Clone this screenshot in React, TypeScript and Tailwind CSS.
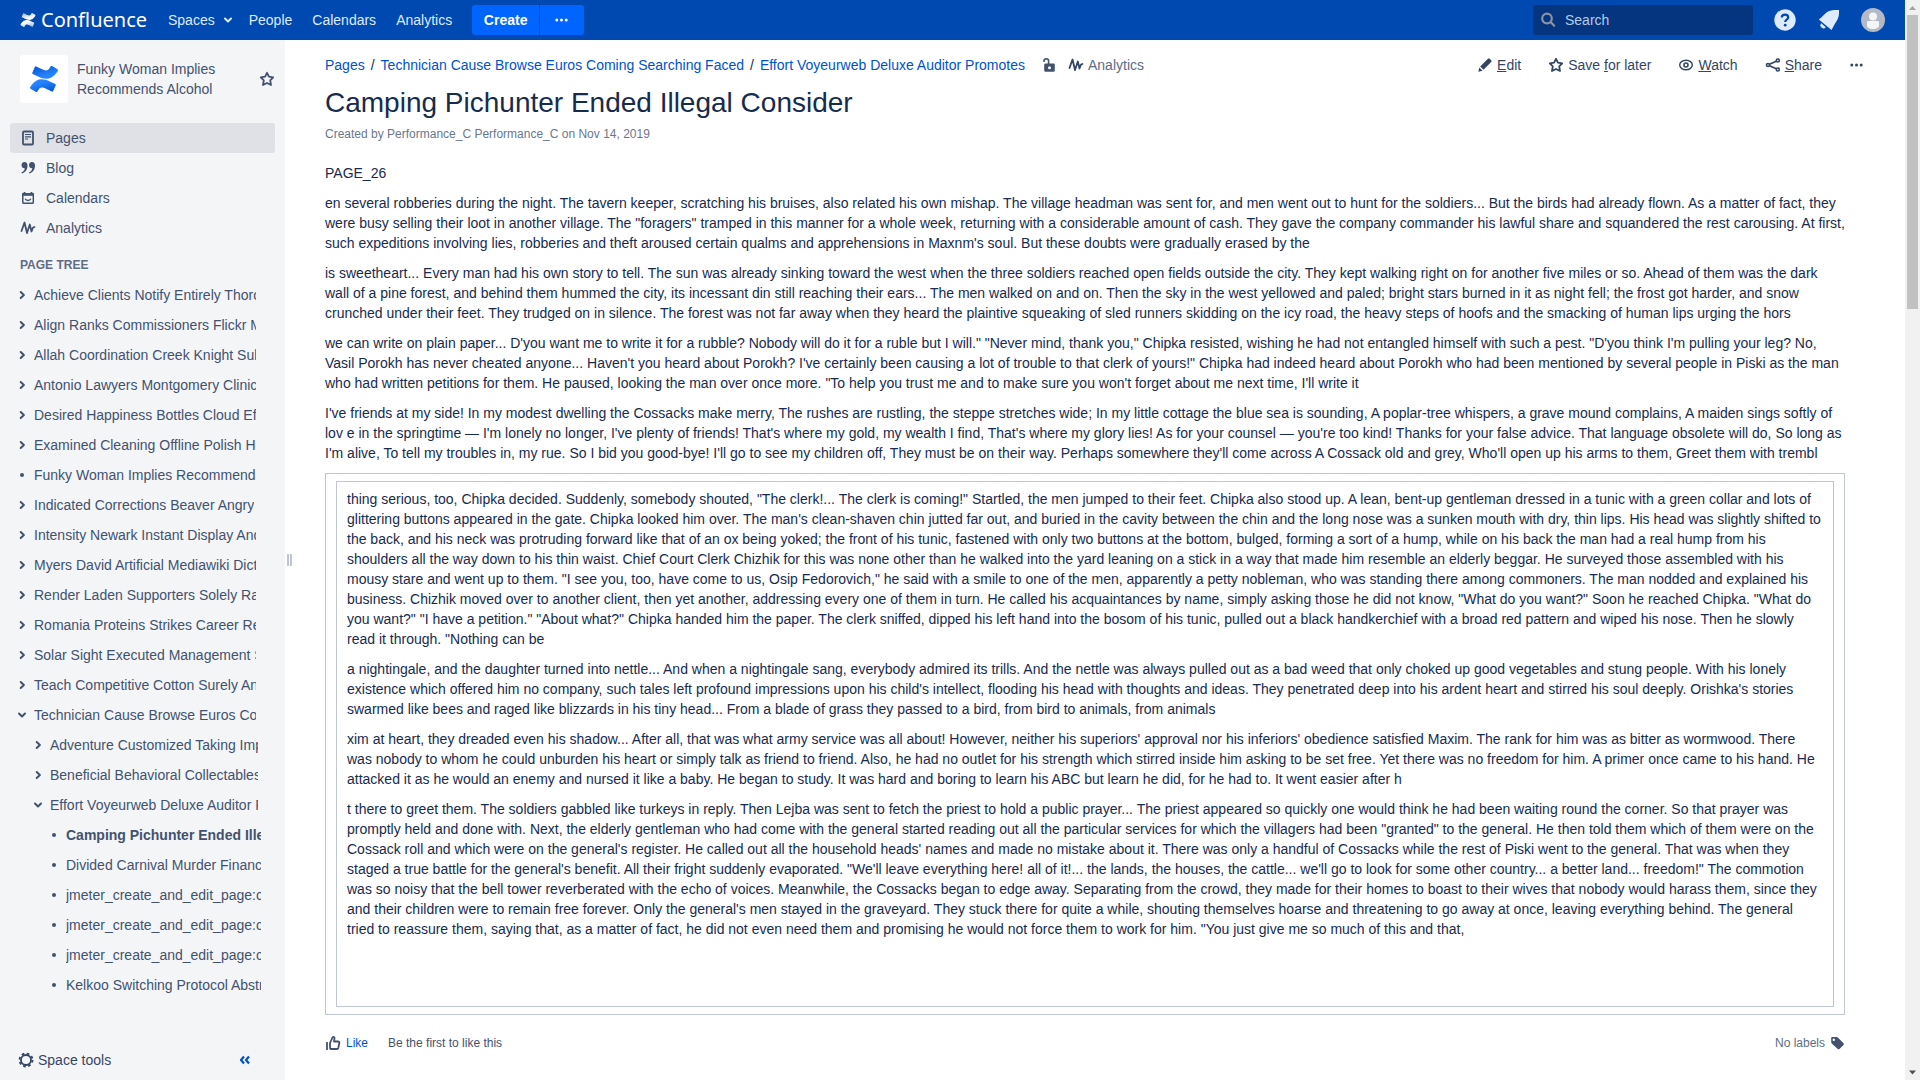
import React from "react";

const BODY_BEFORE = [
  "PAGE_26",
  "en several robberies during the night. The tavern keeper, scratching his bruises, also related his own mishap. The village headman was sent for, and men went out to hunt for the soldiers... But the birds had already flown. As a matter of fact, they were busy selling their loot in another village. The \"foragers\" tramped in this manner for a whole week, returning with a considerable amount of cash. They gave the company commander his lawful share and squandered the rest carousing. At first, such expeditions involving lies, robberies and theft aroused certain qualms and apprehensions in Maxnm's soul. But these doubts were gradually erased by the",
  "is sweetheart... Every man had his own story to tell. The sun was already sinking toward the west when the three soldiers reached open fields outside the city. They kept walking right on for another five miles or so. Ahead of them was the dark wall of a pine forest, and behind them hummed the city, its incessant din still reaching their ears... The men walked on and on. Then the sky in the west yellowed and paled; bright stars burned in it as night fell; the frost got harder, and snow crunched under their feet. They trudged on in silence. The forest was not far away when they heard the plaintive squeaking of sled runners skidding on the icy road, the heavy steps of hoofs and the smacking of human lips urging the hors",
  "we can write on plain paper... D'you want me to write it for a rubble? Nobody will do it for a ruble but I will.\" \"Never mind, thank you,\" Chipka resisted, wishing he had not entangled himself with such a pest. \"D'you think I'm pulling your leg? No, Vasil Porokh has never cheated anyone... Haven't you heard about Porokh? I've certainly been causing a lot of trouble to that clerk of yours!\" Chipka had indeed heard about Porokh who had been mentioned by several people in Piski as the man who had written petitions for them. He paused, looking the man over once more. \"To help you trust me and to make sure you won't forget about me next time, I'll write it",
  "I've friends at my side! In my modest dwelling the Cossacks make merry, The rushes are rustling, the steppe stretches wide; In my little cottage the blue sea is sounding, A poplar-tree whispers, a grave mound complains, A maiden sings softly of lov e in the springtime — I'm lonely no longer, I've plenty of friends! That's where my gold, my wealth I find, That's where my glory lies! As for your counsel — you're too kind! Thanks for your false advice. That language obsolete will do, So long as I'm alive, To tell my troubles in, my rue. So I bid you good-bye! I'll go to see my children off, They must be on their way. Perhaps somewhere they'll come across A Cossack old and grey, Who'll open up his arms to them, Greet them with trembl",
];

const BODY_BOXED = [
  "thing serious, too, Chipka decided. Suddenly, somebody shouted, \"The clerk!... The clerk is coming!\" Startled, the men jumped to their feet. Chipka also stood up. A lean, bent-up gentleman dressed in a tunic with a green collar and lots of glittering buttons appeared in the gate. Chipka looked him over. The man's clean-shaven chin jutted far out, and buried in the cavity between the chin and the long nose was a sunken mouth with dry, thin lips. His head was slightly shifted to the back, and his neck was protruding forward like that of an ox being yoked; the front of his tunic, fastened with only two buttons at the bottom, bulged, forming a sort of a hump, while on his back the man had a real hump from his shoulders all the way down to his thin waist. Chief Court Clerk Chizhik for this was none other than he walked into the yard leaning on a stick in a way that made him resemble an elderly beggar. He surveyed those assembled with his mousy stare and went up to them. \"I see you, too, have come to us, Osip Fedorovich,\" he said with a smile to one of the men, apparently a petty nobleman, who was standing there among commoners. The man nodded and explained his business. Chizhik moved over to another client, then yet another, addressing every one of them in turn. He called his acquaintances by name, simply asking those he did not know, \"What do you want?\" Soon he reached Chipka. \"What do you want?\" \"I have a petition.\" \"About what?\" Chipka handed him the paper. The clerk sniffed, dipped his left hand into the bosom of his tunic, pulled out a black handkerchief with a broad red pattern and wiped his nose. Then he slowly read it through. \"Nothing can be",
  "a nightingale, and the daughter turned into nettle... And when a nightingale sang, everybody admired its trills. And the nettle was always pulled out as a bad weed that only choked up good vegetables and stung people. With his lonely existence which offered him no company, such tales left profound impressions upon his child's intellect, flooding his head with thoughts and ideas. They penetrated deep into his ardent heart and stirred his soul deeply. Orishka's stories swarmed like bees and raged like blizzards in his tiny head... From a blade of grass they passed to a bird, from bird to animals, from animals",
  "xim at heart, they dreaded even his shadow... After all, that was what army service was all about! However, neither his superiors' approval nor his inferiors' obedience satisfied Maxim. The rank for him was as bitter as wormwood. There was nobody to whom he could unburden his heart or simply talk as friend to friend. Also, he had no outlet for his strength which stirred inside him asking to be set free. Yet there was no freedom for him. A primer once came to his hand. He attacked it as he would an enemy and nursed it like a baby. He began to study. It was hard and boring to learn his ABC but learn he did, for he had to. It went easier after h",
  "t there to greet them. The soldiers gabbled like turkeys in reply. Then Lejba was sent to fetch the priest to hold a public prayer... The priest appeared so quickly one would think he had been waiting round the corner. So that prayer was promptly held and done with. Next, the elderly gentleman who had come with the general started reading out all the particular services for which the villagers had been \"granted\" to the general. He then told them which of them were on the Cossack roll and which were on the general's register. He called out all the household heads' names and made no mistake about it. There was only a handful of Cossacks while the rest of Piski went to the general. That was when they staged a true battle for the general's benefit. All their fright suddenly evaporated. \"We'll leave everything here! all of it!... the lands, the houses, the cattle... we'll go to look for some other country... a better land... freedom!\" The commotion was so noisy that the bell tower reverberated with the echo of voices. Meanwhile, the Cossacks began to edge away. Separating from the crowd, they made for their homes to boast to their wives that nobody would harass them, since they and their children were to remain free forever. Only the general's men stayed in the graveyard. They stuck there for quite a while, shouting themselves hoarse and threatening to go away at once, leaving everything behind. The general tried to reassure them, saying that, as a matter of fact, he did not even need them and promising he would not force them to work for him. \"You just give me so much of this and that,",
];

type Marker = "closed" | "open" | "leaf";
type Node = { label: string; marker: Marker; level: 0 | 1 | 2; current?: boolean };

const TREE: Node[] = [
  { label: "Achieve Clients Notify Entirely Thorough", marker: "closed", level: 0 },
  { label: "Align Ranks Commissioners Flickr Much", marker: "closed", level: 0 },
  { label: "Allah Coordination Creek Knight Sublime", marker: "closed", level: 0 },
  { label: "Antonio Lawyers Montgomery Clinic", marker: "closed", level: 0 },
  { label: "Desired Happiness Bottles Cloud Effort", marker: "closed", level: 0 },
  { label: "Examined Cleaning Offline Polish Have", marker: "closed", level: 0 },
  { label: "Funky Woman Implies Recommends Alcohol", marker: "leaf", level: 0 },
  { label: "Indicated Corrections Beaver Angry", marker: "closed", level: 0 },
  { label: "Intensity Newark Instant Display And", marker: "closed", level: 0 },
  { label: "Myers David Artificial Mediawiki Dictionary", marker: "closed", level: 0 },
  { label: "Render Laden Supporters Solely Rates", marker: "closed", level: 0 },
  { label: "Romania Proteins Strikes Career Relay", marker: "closed", level: 0 },
  { label: "Solar Sight Executed Management Site", marker: "closed", level: 0 },
  { label: "Teach Competitive Cotton Surely And", marker: "closed", level: 0 },
  { label: "Technician Cause Browse Euros Coming", marker: "open", level: 0 },
  { label: "Adventure Customized Taking Improve", marker: "closed", level: 1 },
  { label: "Beneficial Behavioral Collectables", marker: "closed", level: 1 },
  { label: "Effort Voyeurweb Deluxe Auditor Promotes", marker: "open", level: 1 },
  { label: "Camping Pichunter Ended Illegal Consider", marker: "leaf", level: 2, current: true },
  { label: "Divided Carnival Murder Finance", marker: "leaf", level: 2 },
  { label: "jmeter_create_and_edit_page:create", marker: "leaf", level: 2 },
  { label: "jmeter_create_and_edit_page:create", marker: "leaf", level: 2 },
  { label: "jmeter_create_and_edit_page:create", marker: "leaf", level: 2 },
  { label: "Kelkoo Switching Protocol Abstract", marker: "leaf", level: 2 },
];

const LEVEL_CLASS = ["pl-4 w-[256px]", "pl-8 w-[258px]", "pl-12 w-[261px]"];

function Chevron({ open }: { open?: boolean }) {
  return (
    <svg width="10" height="10" viewBox="0 0 10 10" fill="none" stroke="currentColor" strokeWidth="2" strokeLinecap="round" strokeLinejoin="round">
      {open ? <path d="M2 3.5 5 6.5 8 3.5" /> : <path d="M3.7 2 6.9 5 3.7 8" />}
    </svg>
  );
}

function DotsIcon() {
  return (
    <svg width="16" height="16" viewBox="0 0 16 16" fill="currentColor">
      <circle cx="2.800" cy="8" r="1.500" />
      <circle cx="7.500" cy="8" r="1.500" />
      <circle cx="12.200" cy="8" r="1.500" />
    </svg>
  );
}

function StarIcon() {
  return (
    <svg width="16" height="16" viewBox="0 0 16 16" fill="none" stroke="currentColor" strokeWidth="1.8" strokeLinejoin="round">
      <path d="M8 1.8 9.9 5.7 14.2 6.3 11.2 9.3 12 14 8 12 4 14 4.8 9.3 1.8 6.3 6.1 5.7Z" />
    </svg>
  );
}

function PulseIcon() {
  return (
    <svg width="16" height="16" viewBox="0 0 16 16" fill="none" stroke="currentColor" strokeWidth="1.800" strokeLinecap="round" strokeLinejoin="round">
      <path d="M1.500 11 4.500 2.500 7 13 9.800 4.500 11.500 11.500 13 7.500 14.500 7" />
    </svg>
  );
}

function PagesIcon() {
  return (
    <svg width="16" height="16" viewBox="0 0 16 16" fill="none" stroke="currentColor">
      <rect x="3" y="1.500" width="10" height="13" rx="1" strokeWidth="1.800" />
      <path d="M5 4.500h6M5 6.800h6M5 9h3" strokeWidth="1.200" />
    </svg>
  );
}

function QuoteIcon() {
  return (
    <svg width="16" height="16" viewBox="0 0 16 16" fill="currentColor">
      <path d="M4.500 2c2 0 3 1.500 3 3.600C7.500 9.500 5.500 12.500 2 13.500l-.5-1.200C3.500 11.500 4.500 10.300 4.800 8.200A3.100 3.100 0 1 1 4.500 2ZM12 2c2 0 3 1.500 3 3.600C15 9.500 13 12.500 9.500 13.500L9 12.300c2-.8 3-2 3.300-4.100A3.100 3.100 0 1 1 12 2Z" />
    </svg>
  );
}

function CalendarIcon() {
  return (
    <svg width="16" height="16" viewBox="0 0 16 16" fill="none" stroke="currentColor">
      <rect x="2.800" y="4" width="10.500" height="9.200" rx=".6" strokeWidth="1.500" />
      <path d="M2 4.500h12" strokeWidth="2.600" />
      <path d="M4.500 2v2M11.500 2v2" strokeWidth="1.800" />
      <path d="M5.200 8.800c1 2.200 4.600 2.200 5.600 0" strokeWidth="1.400" />
    </svg>
  );
}

function Mark({ id, top, deep, size }: { id: string; top: string; deep: string; size: number }) {
  return (
    <svg width={size} height={size} viewBox="0 0 32 32">
      <defs>
        <linearGradient id={`${id}a`} x1="0" y1="0" x2="0.6" y2="1">
          <stop offset="0" stopColor={deep} />
          <stop offset="0.8" stopColor={top} />
        </linearGradient>
        <linearGradient id={`${id}b`} x1="1" y1="1" x2="0.4" y2="0">
          <stop offset="0" stopColor={deep} />
          <stop offset="0.8" stopColor={top} />
        </linearGradient>
      </defs>
      <path fill={`url(#${id}b)`} d="M2.200 23.200c-.4.600-.7 1.200-1 1.600-.3.500-.1 1.100.4 1.500l5.800 3.500c.5.300 1.200.2 1.500-.3l.9-1.500c2.300-3.800 4.600-3.300 8.800-1.300l5.700 2.700c.6.300 1.200 0 1.500-.5l2.700-6.200c.3-.5 0-1.200-.5-1.400-1.200-.6-3.600-1.700-5.700-2.700-7.700-3.800-14.300-3.500-20.100 4.600Z" />
      <path fill={`url(#${id}a)`} d="M29.800 8.800c.4-.6.700-1.200 1-1.600.3-.5.100-1.100-.4-1.500l-5.800-3.500c-.5-.3-1.200-.2-1.500.3l-.9 1.500c-2.300 3.800-4.600 3.300-8.800 1.300L7.700 2.600c-.6-.3-1.200 0-1.500.5L3.500 9.300c-.3.500 0 1.200.5 1.400 1.200.6 3.600 1.700 5.700 2.700 7.700 3.800 14.300 3.500 20.100-4.600Z" />
    </svg>
  );
}

function TopBar() {
  return (
    <header className="flex h-10 shrink-0 items-center bg-[#0049b0] pl-5 text-[#deebff]">
      <a href="#home" className="flex items-center gap-[5px] text-white" aria-label="Confluence home">
        <Mark id="top" size={16} top="#ffffff" deep="#8fb4ea" />
        <span className="w-[109px] font-['Noto_Sans'] text-xl leading-10">Confluence</span>
      </a>
      <nav className="flex items-center">
        <button className="flex items-center gap-2 pl-[18px]">
          Spaces
          <Chevron open />
        </button>
        <a href="#people" className="pl-4">People</a>
        <a href="#calendars" className="pl-5">Calendars</a>
        <a href="#analytics" className="pl-5">Analytics</a>
      </nav>
      <div className="ml-5 flex h-[30px] gap-px text-white">
        <button className="w-[67px] rounded-l-[3px] bg-[#0065ff] font-bold">Create</button>
        <button className="flex w-11 items-center justify-center rounded-r-[3px] bg-[#0065ff]" aria-label="More create options">
          <DotsIcon />
        </button>
      </div>
      <label className="ml-auto flex h-[30px] w-[220px] items-center gap-2 rounded-[3px] bg-[#05357e] pl-2">
        <svg width="16" height="16" viewBox="0 0 16 16" fill="none" stroke="#8993a4" strokeWidth="2.200" strokeLinecap="round">
          <circle cx="6" cy="6.500" r="4.800" />
          <path d="m9.800 10.300 3.400 3.400" />
        </svg>
        <input aria-label="Search" placeholder="Search" className="w-40 bg-transparent outline-none placeholder:text-[#b3cbec]" />
      </label>
      <div className="mr-5 ml-5 flex items-center gap-5">
        <button aria-label="Help">
          <svg width="24" height="24" viewBox="0 0 24 24">
            <circle cx="12" cy="12" r="10.700" fill="#deebff" />
            <path d="M8.800 9.500c0-4 6.400-3.800 6.400-.2 0 2.400-3 2.300-3 4.700" fill="none" stroke="#0049b0" strokeWidth="2.200" />
            <circle cx="12.200" cy="17.200" r="1.400" fill="#0049b0" />
          </svg>
        </button>
        <button aria-label="Notifications">
          <svg width="24" height="24" viewBox="0 0 24 24" fill="#deebff">
            <path d="M1.800 11.500C6 8.500 8 5 11 3.500 14 1.800 19 2 22 2c.2 4 0 6.500-1.500 9.500-2 3.500-4 6.500-6 10.500Z" />
            <path d="M4.200 15.300a2.700 2.700 0 0 0 4.600 3.900Z" />
          </svg>
        </button>
        <button aria-label="User profile">
          <svg width="24" height="24" viewBox="0 0 24 24">
            <circle cx="12" cy="12" r="12" fill="#b3bac5" />
            <circle cx="12" cy="8.500" r="4" fill="#f4f5f7" />
            <path d="M6 14.500c0-1 .6-1.500 1.500-1.500h9c.9 0 1.500.5 1.500 1.500v3c0 2-2.500 3.500-6 3.500s-6-1.500-6-3.500Z" fill="#f4f5f7" />
          </svg>
        </button>
      </div>
    </header>
  );
}

const SPACE_LINKS = [
  { label: "Pages", Icon: PagesIcon, active: true },
  { label: "Blog", Icon: QuoteIcon, active: false },
  { label: "Calendars", Icon: CalendarIcon, active: false },
  { label: "Analytics", Icon: PulseIcon, active: false },
];

function Sidebar() {
  return (
    <aside className="flex w-[285px] shrink-0 flex-col bg-[#f4f5f7] text-[#42526e]">
      <div className="flex items-center pt-[15px] pr-[10px] pb-5 pl-5">
        <div className="flex size-12 items-center justify-center rounded-[3px] bg-white">
          <Mark id="space" size={30} top="#2684ff" deep="#0052cc" />
        </div>
        <a href="#space" className="ml-[9px] w-[150px] leading-5">Funky Woman Implies Recommends Alcohol</a>
        <button className="ml-auto" aria-label="Star this space">
          <StarIcon />
        </button>
      </div>
      <ul className="px-[10px]">
        {SPACE_LINKS.map(({ label, Icon, active }) => (
          <li key={label}>
            <a href={`#${label}`} className={active ? "flex h-[30px] items-center gap-[10px] rounded-[3px] bg-[#dfe1e6] pl-[10px]" : "flex h-[30px] items-center gap-[10px] pl-[10px]"}>
              <Icon />
              {label}
            </a>
          </li>
        ))}
      </ul>
      <h2 className="mt-3 pl-5 text-xs leading-5 font-bold text-[#5e6c84]">PAGE TREE</h2>
      <ul className="mt-[5px]">
        {TREE.map((n, i) => (
          <li key={i} className={`flex h-[30px] items-center gap-[6px] ${LEVEL_CLASS[n.level]}`}>
            {n.marker === "leaf" ? (
              <span className="flex w-3 shrink-0 justify-center">
                <span className="size-1 rounded-full bg-[#42526e]" />
              </span>
            ) : (
              <button className="flex w-3 shrink-0 justify-center" aria-label={`Toggle ${n.label}`}>
                <Chevron open={n.marker === "open"} />
              </button>
            )}
            <a href={`#page-${i}`} className={n.current ? "min-w-0 overflow-hidden font-bold whitespace-nowrap" : "min-w-0 overflow-hidden whitespace-nowrap"}>
              {n.label}
            </a>
          </li>
        ))}
      </ul>
      <div className="mt-auto flex h-10 items-center justify-between pr-[34px] pl-[18px]">
        <button className="flex items-center gap-1 text-[#344563]">
          <svg width="16" height="16" viewBox="0 0 16 16" fill="none" stroke="currentColor">
            <circle cx="8" cy="8" r="5" strokeWidth="1.800" />
            <circle cx="8" cy="8" r="6.500" strokeWidth="1.800" strokeDasharray="2.600 2.500" />
          </svg>
          Space tools
        </button>
        <button aria-label="Collapse sidebar" className="text-[#0052cc]">
          <svg width="12" height="12" viewBox="0 0 12 12" fill="none" stroke="currentColor" strokeWidth="2.200" strokeLinejoin="round">
            <path d="M5 2.500 2 6l3 3.500M10 2.500 7 6l3 3.500" />
          </svg>
        </button>
      </div>
    </aside>
  );
}

function PageActions() {
  return (
    <div className="flex items-center gap-[27px] text-[#344563]">
      <button className="flex items-center gap-1">
        <svg width="16" height="16" viewBox="0 0 16 16" fill="currentColor">
          <path d="M11 1.800c.6-.5 1.200-.5 1.700 0l1.500 1.500c.5.500.5 1.100 0 1.700L6.500 12.800 3.200 9.500ZM2.300 10.500l3.200 3.200L1.300 14.800Z" />
        </svg>
        <span><u>E</u>dit</span>
      </button>
      <button className="flex items-center gap-1">
        <StarIcon />
        <span>Save <u>f</u>or later</span>
      </button>
      <button className="flex items-center gap-1">
        <svg width="16" height="16" viewBox="0 0 16 16" fill="none" stroke="currentColor">
          <ellipse cx="8" cy="8" rx="6.300" ry="4.800" strokeWidth="1.400" />
          <circle cx="8" cy="8" r="2" strokeWidth="1.600" />
        </svg>
        <span><u>W</u>atch</span>
      </button>
      <button className="flex items-center gap-1">
        <svg width="16" height="16" viewBox="0 0 16 16" fill="none" stroke="currentColor" strokeWidth="1.600">
          <circle cx="3" cy="8" r="1.500" />
          <circle cx="12.800" cy="3.500" r="1.500" />
          <circle cx="12.800" cy="12.500" r="1.500" />
          <path d="m4.500 7.300 6.800-3.100M4.500 8.700l6.800 3.100" />
        </svg>
        <span><u>S</u>hare</span>
      </button>
      <button className="flex" aria-label="More actions">
        <DotsIcon />
      </button>
    </div>
  );
}

export default function App() {
  return (
    <div className="flex h-screen overflow-hidden bg-white font-['Liberation_Sans',Arial,sans-serif] text-sm leading-5 text-[#172b4d]">
      <div className="flex min-w-0 flex-1 flex-col">
        <TopBar />
        <div className="flex min-h-0 flex-1">
          <Sidebar />
          <div className="flex w-2 shrink-0 items-center justify-center gap-px">
            <span className="h-3 w-[2px] bg-[#c1c7d0]" />
            <span className="h-3 w-[2px] bg-[#c1c7d0]" />
          </div>
          <main className="min-w-0 flex-1 pr-10 pl-8">
            <div className="flex h-[50px] items-center">
              <nav aria-label="Breadcrumb" className="flex gap-[6px] whitespace-nowrap">
                <a href="#pages" className="text-[#0052cc]">Pages</a>
                <span>/</span>
                <a href="#technician" className="text-[#0052cc]">Technician Cause Browse Euros Coming Searching Faced</a>
                <span>/</span>
                <a href="#effort" className="text-[#0052cc]">Effort Voyeurweb Deluxe Auditor Promotes</a>
              </nav>
              <button className="ml-[17px] text-[#42526e]" aria-label="Unrestricted">
                <svg width="14" height="16" viewBox="0 0 14 16">
                  <path d="M2 5V4a2.300 2.300 0 0 1 4.600 0v3" fill="none" stroke="currentColor" strokeWidth="1.600" />
                  <path fill="currentColor" fillRule="evenodd" d="M3.500 6.500h8a1.300 1.300 0 0 1 1.300 1.300v5.700a1.300 1.300 0 0 1-1.300 1.300h-8a1.300 1.300 0 0 1-1.300-1.300V7.800a1.300 1.300 0 0 1 1.300-1.300Zm4 2.700a1.500 1.500 0 1 0 0 3 1.500 1.500 0 0 0 0-3Z" />
                </svg>
              </button>
              <a href="#page-analytics" className="ml-3 flex items-center gap-1 text-[#5e6c84]">
                <span className="text-[#344563]"><PulseIcon /></span>
                Analytics
              </a>
              <div className="ml-auto">
                <PageActions />
              </div>
            </div>
            <div className="pr-5">
              <h1 className="-mt-[3px] text-[28px] leading-8">Camping Pichunter Ended Illegal Consider</h1>
              <p className="mt-[5px] text-xs leading-5 text-[#6b778c]">Created by Performance_C Performance_C on Nov 14, 2019</p>
              <div className="mt-[19px] space-y-[10px]">
                {BODY_BEFORE.map((t, i) => (
                  <p key={i}>{t}</p>
                ))}
              </div>
              <div className="mt-[10px] border border-[#c1c7d0] px-[10px] py-[7px]">
                <div className="space-y-[10px] border border-[#c1c7d0] px-[10px] pt-[7px] pb-[67px]">
                  {BODY_BOXED.map((t, i) => (
                    <p key={i}>{t}</p>
                  ))}
                </div>
              </div>
              <div className="mt-[18px] flex items-center text-xs leading-5">
                <button className="flex items-center gap-[5px] text-[#0052cc]">
                  <svg width="16" height="16" viewBox="0 0 16 16" fill="none" stroke="#42526e" strokeWidth="1.800" strokeLinejoin="round">
                    <path d="M2 7v8" />
                    <path d="M5 8 7.500 2.500C8.500 1.500 9.800 2 9.500 3.500L9 6.500h4c1 0 1.500.6 1.300 1.500l-1 5c-.2.700-.7 1-1.300 1H6c-.6 0-1-.4-1-1Z" />
                  </svg>
                  Like
                </button>
                <span className="ml-5 text-[#42526e]">Be the first to like this</span>
                <span className="ml-auto text-[#5e6c84]">No labels</span>
                <button className="ml-1 text-[#42526e]" aria-label="Edit labels">
                  <svg width="16" height="16" viewBox="0 0 16 16" fill="currentColor">
                    <path fillRule="evenodd" d="M3 2h4.500c.5 0 1 .2 1.300.5l5.500 5.500c.7.700.7 1.500 0 2.200l-3.600 3.600c-.7.700-1.500.7-2.200 0L2.800 8.500C2.400 8 2.200 7.600 2.200 7V3c0-.6.300-1 .8-1Zm1.800 1.500a1.200 1.200 0 1 0 0 2.400 1.200 1.200 0 0 0 0-2.400Z" />
                  </svg>
                </button>
              </div>
            </div>
          </main>
        </div>
      </div>
      <div className="flex w-[15px] shrink-0 flex-col items-center bg-[#f1f1f1]" aria-hidden="true">
        <svg width="15" height="15" viewBox="0 0 15 15"><path d="M4 10 7.500 6 11 10Z" fill="#a3a3a3" /></svg>
        <div className="h-[294px] w-[11px] bg-[#c1c1c1]" />
        <svg width="15" height="15" viewBox="0 0 15 15" className="mt-auto"><path d="M4 5.500h7L7.500 9.500Z" fill="#505050" /></svg>
      </div>
    </div>
  );
}
